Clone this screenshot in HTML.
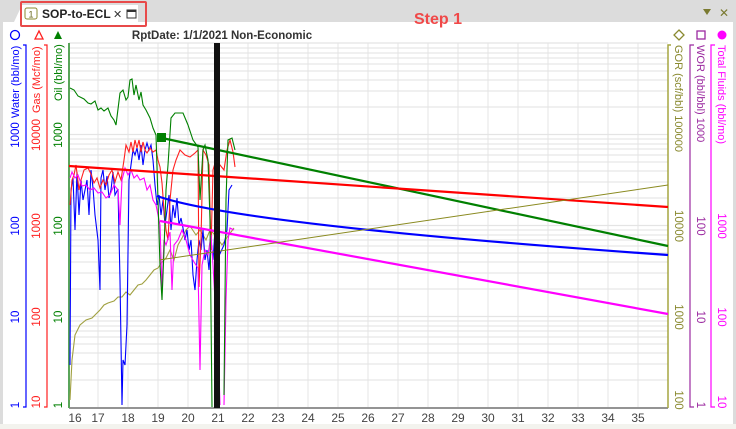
<!DOCTYPE html>
<html><head><meta charset="utf-8"><style>
html,body{margin:0;padding:0;width:736px;height:429px;overflow:hidden;background:#fff;font-family:"Liberation Sans",sans-serif}
</style></head><body>
<svg width="736" height="429" xmlns="http://www.w3.org/2000/svg" font-family="Liberation Sans, sans-serif">
<rect x="0" y="0" width="736" height="429" fill="#fff"/>
<rect x="0" y="0" width="736" height="22" fill="#dcdcdc"/>
<rect x="0" y="22" width="3" height="407" fill="#dcdcdc"/>
<rect x="733" y="22" width="3" height="407" fill="#dcdcdc"/>
<rect x="0" y="424" width="736" height="5" fill="#f3f3ee"/>
<!-- tab -->
<path d="M14,22 L22,5 L138,5 L138,22 Z" fill="#fff"/>
<rect x="25" y="8" width="12" height="11" rx="2" fill="#fff" stroke="#8a8a30"/>
<text x="28.5" y="17.5" font-size="9" fill="#6a6a20">1</text>
<text x="42" y="18" font-size="12" font-weight="bold" fill="#222">SOP-to-ECL</text>
<text x="113" y="18" font-size="11" fill="#333">✕</text>
<rect x="127" y="10" width="9" height="8" fill="#fff" stroke="#333"/>
<line x1="127" y1="11" x2="136" y2="11" stroke="#333" stroke-width="2"/>
<rect x="21" y="2" width="125" height="24" fill="none" stroke="#e84a4a" stroke-width="2" rx="1"/>
<text x="414" y="24" font-size="16" font-weight="bold" fill="#f04848">Step 1</text>
<path d="M703,9 L711,9 L707,15 Z" fill="#7a7a30"/>
<text x="719" y="17" font-size="12" fill="#7a7a30">✕</text>
<!-- title -->
<text x="222" y="39" font-size="11.5" font-weight="bold" fill="#333" text-anchor="middle">RptDate: 1/1/2021 Non-Economic</text>
<!-- gridlines -->
<g stroke="#e4e4e4" stroke-width="1.3">
<line x1="69" y1="43" x2="668" y2="43"/>
<line x1="69" y1="134.5" x2="668" y2="134.5"/>
<line x1="69" y1="225.5" x2="668" y2="225.5"/>
<line x1="69" y1="316.5" x2="668" y2="316.5"/>
</g>
<g stroke="#e8e8e8" stroke-width="1.3">
<line x1="69" y1="107" x2="668" y2="107"/><line x1="69" y1="91" x2="668" y2="91"/><line x1="69" y1="80" x2="668" y2="80"/><line x1="69" y1="71" x2="668" y2="71"/><line x1="69" y1="64" x2="668" y2="64"/><line x1="69" y1="58" x2="668" y2="58"/><line x1="69" y1="53" x2="668" y2="53"/><line x1="69" y1="48" x2="668" y2="48"/>
<line x1="69" y1="198" x2="668" y2="198"/><line x1="69" y1="182" x2="668" y2="182"/><line x1="69" y1="171" x2="668" y2="171"/><line x1="69" y1="162" x2="668" y2="162"/><line x1="69" y1="155" x2="668" y2="155"/><line x1="69" y1="149" x2="668" y2="149"/><line x1="69" y1="144" x2="668" y2="144"/><line x1="69" y1="139" x2="668" y2="139"/>
<line x1="69" y1="289" x2="668" y2="289"/><line x1="69" y1="273" x2="668" y2="273"/><line x1="69" y1="262" x2="668" y2="262"/><line x1="69" y1="253" x2="668" y2="253"/><line x1="69" y1="246" x2="668" y2="246"/><line x1="69" y1="240" x2="668" y2="240"/><line x1="69" y1="235" x2="668" y2="235"/><line x1="69" y1="230" x2="668" y2="230"/>
<line x1="69" y1="380" x2="668" y2="380"/><line x1="69" y1="364" x2="668" y2="364"/><line x1="69" y1="353" x2="668" y2="353"/><line x1="69" y1="344" x2="668" y2="344"/><line x1="69" y1="337" x2="668" y2="337"/><line x1="69" y1="331" x2="668" y2="331"/><line x1="69" y1="326" x2="668" y2="326"/><line x1="69" y1="321" x2="668" y2="321"/>
</g>
<g stroke="#e4e4e4" stroke-width="1">
<line x1="98" y1="43" x2="98" y2="407"/><line x1="128" y1="43" x2="128" y2="407"/><line x1="158" y1="43" x2="158" y2="407"/><line x1="188" y1="43" x2="188" y2="407"/><line x1="218" y1="43" x2="218" y2="407"/><line x1="248" y1="43" x2="248" y2="407"/><line x1="278" y1="43" x2="278" y2="407"/><line x1="308" y1="43" x2="308" y2="407"/><line x1="338" y1="43" x2="338" y2="407"/><line x1="368" y1="43" x2="368" y2="407"/><line x1="398" y1="43" x2="398" y2="407"/><line x1="428" y1="43" x2="428" y2="407"/><line x1="458" y1="43" x2="458" y2="407"/><line x1="488" y1="43" x2="488" y2="407"/><line x1="518" y1="43" x2="518" y2="407"/><line x1="548" y1="43" x2="548" y2="407"/><line x1="578" y1="43" x2="578" y2="407"/><line x1="608" y1="43" x2="608" y2="407"/><line x1="638" y1="43" x2="638" y2="407"/>
</g>
<!-- bottom axis -->
<line x1="69" y1="408" x2="668" y2="408" stroke="#555" stroke-width="1.3"/>
<g font-size="12" fill="#444" text-anchor="middle">
<text x="75" y="422">16</text><text x="98" y="422">17</text><text x="128" y="422">18</text><text x="158" y="422">19</text><text x="188" y="422">20</text><text x="218" y="422">21</text><text x="248" y="422">22</text><text x="278" y="422">23</text><text x="308" y="422">24</text><text x="338" y="422">25</text><text x="368" y="422">26</text><text x="398" y="422">27</text><text x="428" y="422">28</text><text x="458" y="422">29</text><text x="488" y="422">30</text><text x="518" y="422">31</text><text x="548" y="422">32</text><text x="578" y="422">33</text><text x="608" y="422">34</text><text x="638" y="422">35</text>
</g>
<!-- left axes -->
<path d="M23,45 H26 V407 H23" fill="none" stroke="#0000ff" stroke-width="1.2"/>
<path d="M44,45 H47 V407 H44" fill="none" stroke="#ff2020" stroke-width="1.2"/>
<line x1="69" y1="43" x2="69" y2="408" stroke="#5aa55a" stroke-width="2"/>
<circle cx="15" cy="35" r="4.5" fill="none" stroke="#0000ff" stroke-width="1.3"/>
<path d="M35,39 L39,31 L43,39 Z" fill="none" stroke="#ff2020" stroke-width="1.3"/>
<path d="M54,39 L58,31 L62,39 Z" fill="#008000"/>
<g font-size="11">
<text transform="translate(19,118) rotate(-90)" fill="#0000ff">Water (bbl/mo)</text>
<text transform="translate(40,113) rotate(-90)" fill="#ff2020">Gas (Mcf/mo)</text>
<text transform="translate(62,101) rotate(-90)" fill="#008000">Oil (bbl/mo)</text>
<g text-anchor="middle" font-size="11.5">
<text transform="translate(19,135) rotate(-90)" fill="#0000ff">1000</text>
<text transform="translate(19,226) rotate(-90)" fill="#0000ff">100</text>
<text transform="translate(19,317) rotate(-90)" fill="#0000ff">10</text>
<text transform="translate(19,405) rotate(-90)" fill="#0000ff">1</text>
<text transform="translate(40,135) rotate(-90)" fill="#ff2020">10000</text>
<text transform="translate(40,226) rotate(-90)" fill="#ff2020">1000</text>
<text transform="translate(40,317) rotate(-90)" fill="#ff2020">100</text>
<text transform="translate(40,402) rotate(-90)" fill="#ff2020">10</text>
<text transform="translate(62,135) rotate(-90)" fill="#008000">1000</text>
<text transform="translate(62,226) rotate(-90)" fill="#008000">100</text>
<text transform="translate(62,317) rotate(-90)" fill="#008000">10</text>
<text transform="translate(62,405) rotate(-90)" fill="#008000">1</text>
</g>
</g>
<!-- right axes -->
<path d="M671,45 H668 V408" fill="none" stroke="#a6a640" stroke-width="1.5"/>
<path d="M694,45 H690 V407 H694" fill="none" stroke="#9b2aa0" stroke-width="1.2"/>
<path d="M715,45 H711 V407 H715" fill="none" stroke="#ff00ff" stroke-width="1.2"/>
<path d="M679,30 L684,35 L679,40 L674,35 Z" fill="none" stroke="#8a8a30" stroke-width="1.3"/>
<rect x="697" y="31" width="8" height="8" fill="none" stroke="#9b2aa0" stroke-width="1.3"/>
<circle cx="722" cy="35" r="4.5" fill="#ff00ff"/>
<g font-size="11">
<text transform="translate(675,45) rotate(90)" fill="#8a8a30">GOR (scf/bbl)  100000</text>
<text transform="translate(697,45) rotate(90)" fill="#9b2aa0">WOR (bbl/bbl)  1000</text>
<text transform="translate(718,45) rotate(90)" fill="#ff00ff">Total Fluids (bbl/mo)</text>
<g text-anchor="middle" font-size="11.5">
<text transform="translate(675,226) rotate(90)" fill="#8a8a30">10000</text>
<text transform="translate(675,317) rotate(90)" fill="#8a8a30">1000</text>
<text transform="translate(675,400) rotate(90)" fill="#8a8a30">100</text>
<text transform="translate(697,226) rotate(90)" fill="#9b2aa0">100</text>
<text transform="translate(697,317) rotate(90)" fill="#9b2aa0">10</text>
<text transform="translate(697,405) rotate(90)" fill="#9b2aa0">1</text>
<text transform="translate(718,226) rotate(90)" fill="#ff00ff">1000</text>
<text transform="translate(718,317) rotate(90)" fill="#ff00ff">100</text>
<text transform="translate(718,402) rotate(90)" fill="#ff00ff">10</text>
</g>
</g>
<!-- historical data -->
<g fill="none" stroke-width="1.1">
<path stroke="#a0a040" d="M70,400 L72,360 L75,335 L80,325 L86,320 L92,318 L96,314 L100,310 L104,305 L108,303 L114,301 L118,297 L122,297 L126,292 L130,295 L134,290 L138,285 L142,284 L146,280 L150,275 L154,270 L158,268 L162,262 L166,258 L170,250 L174,260 L178,245 L182,238 L186,230 L190,226 L196,235 L200,230 L206,240 L210,230 L216,236 L222,245 L228,236 L234,228"/>
<path stroke="#0000ff" d="M70,365 L71,190 L73,178 L75,230 L77,172 L79,215 L81,180 L83,200 L85,190 L87,180 L89,215 L91,170 L93,188 L95,215 L98,240 L100,290 L101,178 L103,170 L105,190 L107,176 L109,198 L111,190 L113,172 L115,195 L118,189 L120,280 L122,405 L123,360 L125,365 L127,325 L129,180 L131,165 L133,150 L135,155 L137,148 L139,160 L141,145 L143,165 L145,150 L147,143 L149,150 L151,145 L153,160 L155,185 L157,205 L159,195 L161,215 L163,200 L165,225 L167,210 L169,195 L171,230 L173,205 L175,218 L177,198 L179,225 L181,218 L183,228 L185,240 L187,230 L189,250 L191,240 L193,275 L195,290 L197,260 L199,240 L201,250 L203,230 L205,260 L207,250 L209,270 L211,240 L213,260 L215,230 L217,260 L224,245 L227,230 L229,190 L232,185"/>
<path stroke="#ff2020" d="M70,205 L72,180 L74,175 L76,165 L79,190 L81,180 L84,170 L88,168 L91,174 L94,183 L97,178 L100,188 L103,180 L106,185 L109,175 L112,170 L115,182 L118,172 L121,180 L124,160 L126,145 L129,152 L131,142 L133,152 L135,140 L137,148 L139,140 L141,152 L143,142 L145,150 L147,153 L150,148 L153,152 L156,150 L158,160 L160,167 L162,183 L164,210 L166,230 L168,240 L170,200 L173,170 L176,160 L180,150 L185,155 L190,157 L195,153 L198,150 L199,287 L201,240 L203,150 L206,155 L209,165 L211,250 L213,170 L216,160 L224,170 L227,150 L230,140 L233,152 L235,167"/>
<path stroke="#ff00ff" d="M70,178 L72,172 L75,178 L78,175 L82,186 L86,185 L90,190 L94,188 L98,193 L102,192 L106,198 L110,195 L114,185 L118,190 L120,225 L122,180 L125,168 L128,175 L131,170 L134,178 L137,175 L140,180 L144,178 L147,190 L150,185 L153,200 L156,205 L158,215 L160,225 L162,290 L164,240 L166,245 L170,232 L172,290 L174,245 L178,240 L182,230 L186,240 L190,255 L194,262 L198,268 L200,370 L202,265 L205,250 L208,255 L211,235 L213,265 L215,300 L218,340 L220,405 M224,405 L226,300 L228,240 L230,228 L234,230"/>
<path stroke="#008000" d="M70,88 L74,90 L78,96 L84,99 L88,103 L91,104 L95,101 L98,110 L101,108 L104,111 L108,108 L111,116 L114,120 L116,125 L118,109 L120,93 L123,90 L126,100 L128,97 L130,80 L132,79 L134,95 L136,85 L139,100 L141,92 L143,105 L146,110 L150,118 L153,128 L156,135 L158,200 L160,265 L162,300 L164,250 L166,190 L168,165 L171,118 L175,113 L183,113 L188,125 L193,140 L198,147 L200,200 L203,150 L205,145 L208,160 L210,220 L212,407 M224,395 L226,200 L228,140 L232,138 L235,150"/>
</g>
<!-- forecasts -->
<g fill="none">
<line x1="162" y1="138" x2="668" y2="246" stroke="#008000" stroke-width="2.2"/>
<line x1="69" y1="166" x2="668" y2="207" stroke="#ff0000" stroke-width="2.2"/>
<path d="M157,196 Q240,225 668,255" stroke="#0000ff" stroke-width="2.2"/>
<line x1="160" y1="221" x2="668" y2="314" stroke="#ff00ff" stroke-width="2.2"/>
<line x1="159" y1="260" x2="668" y2="185" stroke="#8a8a20" stroke-width="1"/>
</g>
<rect x="157" y="133" width="9" height="9" fill="#008000"/>
<rect x="214" y="43" width="6" height="365" fill="#111"/>
</svg>
</body></html>
